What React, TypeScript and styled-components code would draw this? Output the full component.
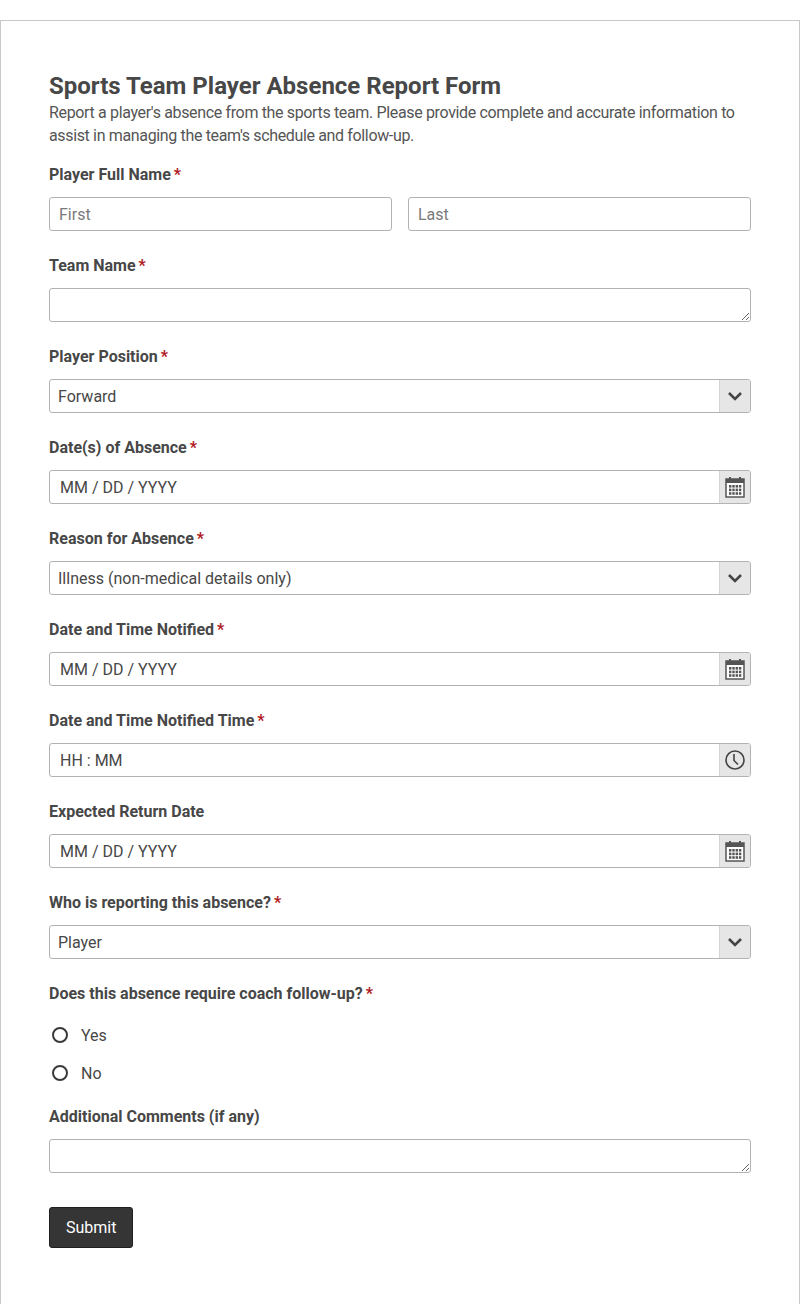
import styled, { createGlobalStyle } from 'styled-components'

const Global = createGlobalStyle`
  body {
    margin: 0;
    padding-top: 20px;
    font-family: Roboto, 'Liberation Sans', sans-serif;
    color: #474747;
    background: #fff;
  }
  * { box-sizing: border-box; }
`

const Card = styled.form`
  width: 800px;
  border: 1px solid #c8c8c8;
  padding: 50px 48px 56px 48px;
`

const Title = styled.h1`
  font-size: 24px;
  font-weight: 700;
  margin: 0;
  line-height: 30px;
  color: #474747;
`

const Intro = styled.p`
  font-size: 16px;
  letter-spacing: -0.35px;
  line-height: 23px;
  margin: 0 0 18px;
  color: #555;
`

const Field = styled.div`
  margin-bottom: 25px;
`

const Label = styled.div`
  font-size: 16px;
  font-weight: 700;
  line-height: 20px;
  margin-bottom: 12px;
  color: #474747;
`

const Star = styled.span`
  color: #b0191e;
  margin-left: 3px;
`

const Row = styled.div`
  display: flex;
  gap: 16px;
`

const Input = styled.input`
  width: 100%;
  height: 34px;
  border: 1px solid #b3b3b3;
  border-radius: 3px;
  padding: 0 10px 0 9px;
  font-family: inherit;
  font-size: 16px;
  color: #474747;
  &::placeholder { color: #7a7a7a; }
`

const Area = styled.textarea`
  display: block;
  width: 100%;
  height: 34px;
  border: 1px solid #b3b3b3;
  border-radius: 3px;
  font-family: inherit;
  font-size: 16px;
`

const Wrap = styled.div`
  position: relative;
`

const FakeBox = styled.div<{ $pad: number }>`
  height: 34px;
  border: 1px solid #b3b3b3;
  border-radius: 3px;
  display: flex;
  align-items: center;
  padding-left: ${({ $pad }) => $pad}px;
  font-size: 16px;
  color: #474747;
`

const Addon = styled.div`
  position: absolute;
  right: 1px;
  top: 1px;
  bottom: 1px;
  width: 31px;
  background: #e6e6e6;
  border-left: 1px solid #d4d4d4;
  border-radius: 0 2px 2px 0;
  display: flex;
  align-items: center;
  justify-content: center;
`

const Radio = styled.label`
  display: flex;
  align-items: center;
  gap: 13px;
  height: 38px;
  padding-left: 3px;
  font-size: 16px;
  color: #474747;
`

const Circle = styled.span`
  width: 16px;
  height: 16px;
  border: 2px solid #3a3a3a;
  border-radius: 50%;
`

const Radios = styled.div`
  margin-top: 0;
  margin-bottom: 15px;
`

const Submit = styled.button`
  margin-top: 9px;
  height: 41px;
  padding: 0 16px;
  background: #353535;
  color: #fff;
  border: 1px solid #1f1f1f;
  border-radius: 3px;
  font-family: inherit;
  font-size: 16px;
`

const Chevron = () => (
  <svg width="16" height="10" viewBox="0 0 16 10"><path d="M2 2l6 6 6-6" fill="none" stroke="#444" strokeWidth="2.6" /></svg>
)

const Calendar = () => (
  <svg width="20" height="22" viewBox="0 0 20 22">
    <rect x="1" y="3" width="18" height="18" fill="#fff" stroke="#555" strokeWidth="1.5" />
    <rect x="1" y="3" width="18" height="4" fill="#555" />
    <rect x="4" y="1" width="2" height="4" fill="#555" />
    <rect x="14" y="1" width="2" height="4" fill="#555" />
    {[0, 1, 2].map(r => [0, 1, 2, 3].map(c => (
      <rect key={`${r}-${c}`} x={4 + c * 3.3} y={9 + r * 3.6} width="2.4" height="2.6" fill="#555" />
    )))}
  </svg>
)

const Clock = () => (
  <svg width="22" height="22" viewBox="0 0 22 22">
    <circle cx="11" cy="11" r="9" fill="none" stroke="#444" strokeWidth="1.6" />
    <path d="M10 5v6.5l4 4" fill="none" stroke="#444" strokeWidth="1.6" />
  </svg>
)

function Req({ children, required = true }: { children: string; required?: boolean }) {
  return <Label>{children}{required && <Star>*</Star>}</Label>
}

function WithAddon({ text, icon, pad = 10 }: { text: string; icon: React.ReactNode; pad?: number }) {
  return (
    <Wrap>
      <FakeBox $pad={pad}>{text}</FakeBox>
      <Addon>{icon}</Addon>
    </Wrap>
  )
}

export default function App() {
  return (
    <>
      <Global />
      <Card onSubmit={e => e.preventDefault()}>
        <Title>Sports Team Player Absence Report Form</Title>
        <Intro>
          Report a player's absence from the sports team. Please provide complete and accurate information to assist in managing the team's schedule and follow-up.
        </Intro>
        <Field>
          <Req>Player Full Name</Req>
          <Row>
            <Input placeholder="First" />
            <Input placeholder="Last" />
          </Row>
        </Field>
        <Field>
          <Req>Team Name</Req>
          <Area />
        </Field>
        <Field>
          <Req>Player Position</Req>
          <WithAddon text="Forward" icon={<Chevron />} pad={8} />
        </Field>
        <Field>
          <Req>Date(s) of Absence</Req>
          <WithAddon text="MM / DD / YYYY" icon={<Calendar />} />
        </Field>
        <Field>
          <Req>Reason for Absence</Req>
          <WithAddon text="Illness (non-medical details only)" icon={<Chevron />} pad={8} />
        </Field>
        <Field>
          <Req>Date and Time Notified</Req>
          <WithAddon text="MM / DD / YYYY" icon={<Calendar />} />
        </Field>
        <Field>
          <Req>Date and Time Notified Time</Req>
          <WithAddon text="HH : MM" icon={<Clock />} />
        </Field>
        <Field>
          <Req required={false}>Expected Return Date</Req>
          <WithAddon text="MM / DD / YYYY" icon={<Calendar />} />
        </Field>
        <Field>
          <Req>Who is reporting this absence?</Req>
          <WithAddon text="Player" icon={<Chevron />} pad={8} />
        </Field>
        <Req>Does this absence require coach follow-up?</Req>
        <Radios>
          <Radio><Circle />Yes</Radio>
          <Radio><Circle />No</Radio>
        </Radios>
        <Field>
          <Req required={false}>Additional Comments (if any)</Req>
          <Area />
        </Field>
        <Submit type="submit">Submit</Submit>
      </Card>
    </>
  )
}
